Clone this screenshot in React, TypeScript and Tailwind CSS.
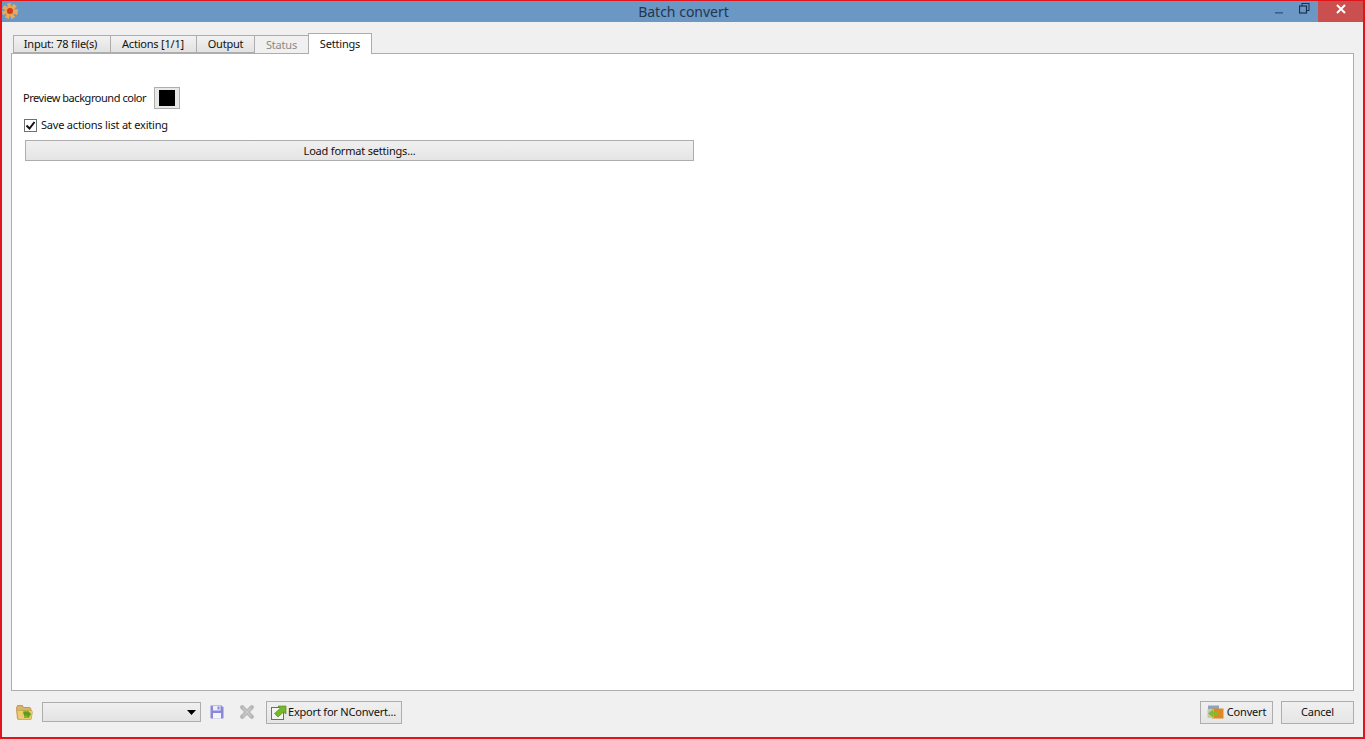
import React from "react";

const font = { fontFamily: '"Noto Sans", sans-serif' };

const FolderIcon = () => (
  <svg width="17" height="15" viewBox="0 0 17 15">
    <path d="M0.5 3 L1.5 0.5 H6.5 L7.5 2.5 H14 L15 4 V14 H1.5 Z" fill="#d8b470" stroke="#b98a3c" strokeWidth="0.8" />
    <path d="M1 5.5 H15.5 L16.5 7 L15 14.5 H2 Z" fill="#eccb72" stroke="#c99a3f" strokeWidth="0.6" />
    <path d="M6 5.5 L11 9 L8 9.5 V13 H13 L15 9 L11.5 5.5 Z" fill="#86b52c" />
    <path d="M7 7 L11.5 7 V5.5 L15 9 L11.5 12.5 V10.5 H8 Z" fill="#5f9c1c" />
  </svg>
);

const SaveIcon = () => (
  <svg width="14" height="14" viewBox="0 0 14 14">
    <path d="M0.5 0.5 H11.5 L13.5 2.5 V13.5 H0.5 Z" fill="#8b88d8" />
    <rect x="3" y="1" width="7.5" height="4.5" fill="#eeeefa" />
    <rect x="7.5" y="1.5" width="2" height="3" fill="#8b88d8" />
    <rect x="3" y="8" width="8" height="5.5" fill="#f4f4fb" />
  </svg>
);

const DeleteIcon = () => (
  <svg width="14" height="14" viewBox="0 0 14 14">
    <path d="M2.2 2.2 L11.8 11.8 M11.8 2.2 L2.2 11.8" stroke="#b7b7b7" strokeWidth="4.2" strokeLinecap="round" />
    <path d="M3 3 L11 11 M11 3 L3 11" stroke="#c9c9c9" strokeWidth="1.4" />
  </svg>
);

const ExportIcon = () => (
  <svg width="16" height="16" viewBox="0 0 16 16" className="shrink-0">
    <rect x="0.5" y="3.5" width="12" height="12" fill="#f4f4ee" stroke="#5d6f86" />
    <path d="M3.5 9.5 L9 4.5 L7 2 H15 V10 L12.5 8 L7 13 Z" fill="#76b82c" stroke="#4c8417" strokeWidth="0.6" />
  </svg>
);

const ConvertIcon = () => (
  <svg width="17" height="14" viewBox="0 0 17 14" className="shrink-0">
    <rect x="1" y="0.5" width="11" height="6" fill="#8ea3bf" />
    <rect x="5" y="3.5" width="11.5" height="10" fill="#dd8a26" />
    <rect x="0.5" y="4" width="6" height="9" fill="#c9c9a8" />
    <path d="M1 8.5 L6 4.5 V7 H11 V10 H6 V12.5 Z" fill="#86bb2e" />
  </svg>
);

const SmallButton = ({ className, children }: { className: string; children: React.ReactNode }) => (
  <div className={`h-[23px] flex items-center justify-center whitespace-nowrap border border-[#adadad] bg-gradient-to-b from-[#f0f0f0] to-[#e5e5e5] text-[11px] tracking-[-0.2px] text-[#111] ${className}`}>
    {children}
  </div>
);

export default function App() {
  const tabs = [
    { label: "Input: 78 file(s)", width: "w-[97px] pr-[3px]" },
    { label: "Actions [1/1]", width: "w-[86px] pr-[1px]" },
    { label: "Output", width: "w-[58px]" },
  ];

  return (
    <div style={font} className="w-[1365px] h-[739px] flex flex-col bg-[#f0f0f0] border-t border-l-2 border-r-2 border-b-2 border-[#e0141c] overflow-hidden">
      {/* Title bar */}
      <div className="h-[21px] shrink-0 flex items-center justify-between bg-[#6b97c5] relative">
        <div className="absolute -left-[2px] top-0">
          <svg width="20" height="20" viewBox="0 0 20 20">
            <circle cx="10" cy="10" r="5.5" fill="#ee9a3e" stroke="#e8a95e" strokeWidth="5" strokeDasharray="3 1.6" />
            <circle cx="10" cy="10" r="3" fill="#d23c1e" />
          </svg>
        </div>
        <div className="flex-1 text-center text-[14px] text-[#24364d] pl-[90px]">Batch convert</div>
        <div className="flex items-center h-full">
          <svg width="10" height="4" viewBox="0 0 10 4" className="mt-[2px]">
            <rect x="0" y="1" width="8" height="1.6" fill="#3f5f87" />
          </svg>
          <svg width="11" height="11" viewBox="0 0 11 11" className="ml-[14px] mb-[6px]">
            <rect x="3" y="0.5" width="7" height="7" fill="none" stroke="#1c2f4d" />
            <rect x="0.5" y="3" width="7" height="7" fill="#6b97c5" stroke="#1c2f4d" strokeWidth="1.2" />
          </svg>
          <div className="ml-[8px] w-[45px] h-full bg-[#c9504f] flex items-center justify-center">
            <svg width="10" height="10" viewBox="0 0 10 10" className="mb-[5px]">
              <path d="M1 1 L9 9 M9 1 L1 9" stroke="#fff" strokeWidth="2" />
            </svg>
          </div>
        </div>
      </div>

      {/* Tabs */}
      <div className="h-[31px] shrink-0 flex items-end pl-[11px] relative z-10 text-[11px] tracking-[-0.2px]">
        {tabs.map((t) => (
          <div key={t.label} className={`${t.width} h-[18px] pt-[1px] flex items-center justify-center border border-[#adadad] border-r-0 bg-gradient-to-b from-[#f2f2f2] to-[#e2e2e2] text-[#111]`}>
            {t.label}
          </div>
        ))}
        <div className="w-[54px] h-[18px] pt-[1px] flex items-center justify-center border-l border-t border-[#adadad] text-[#8a8a8a]">Status</div>
        <div className="w-[64px] h-[21px] -mb-px flex items-center justify-center border border-b-0 border-[#adadad] bg-white text-[#111]">Settings</div>
      </div>

      {/* Panel */}
      <div className="mx-[9px] flex-1 border border-[#adadad] bg-white pl-[11px] pt-[32px]">
        <div className="flex items-center h-[24px] text-[11px] tracking-[-0.45px] text-[#111]">
          <span>Preview background color</span>
          <div className="ml-[8px] w-[26px] h-[22px] flex items-center justify-center border border-[#adadad] bg-[#e8e8e8]">
            <div className="w-[16px] h-[16px] bg-black" />
          </div>
        </div>
        <div className="mt-[7px] flex items-center h-[16px] text-[11px] tracking-[-0.2px] text-[#111]">
          <div className="ml-[1px] w-[13px] h-[13px] border border-[#707070] bg-white flex items-center justify-center">
            <svg width="11" height="11" viewBox="0 0 11 11">
              <path d="M1.5 5.5 L4.5 8.5 L9.5 2" fill="none" stroke="#111" strokeWidth="2" />
            </svg>
          </div>
          <span className="ml-[4px]">Save actions list at exiting</span>
        </div>
        <SmallButton className="mt-[7px] ml-[2px] w-[669px] !h-[21px] pt-[1px]">Load format settings...</SmallButton>
      </div>

      {/* Bottom bar */}
      <div className="h-[46px] shrink-0 flex items-center pl-[14px] pr-[9px] pb-[4px] text-[11px] text-[#111]">
        <FolderIcon />
        <div className="ml-[9px] w-[159px] h-[20px] flex items-center justify-end pr-[4px] border border-[#adadad] bg-gradient-to-b from-[#f0f0f0] to-[#e3e3e3]">
          <svg width="9" height="5" viewBox="0 0 9 5">
            <path d="M0 0 H9 L4.5 5 Z" fill="#000" />
          </svg>
        </div>
        <div className="ml-[9px]"><SaveIcon /></div>
        <div className="ml-[16px]"><DeleteIcon /></div>
        <SmallButton className="ml-[12px] w-[136px] !justify-start pl-[4px] gap-[1px]">
          <ExportIcon />
          <span>Export for NConvert...</span>
        </SmallButton>
        <div className="flex-1" />
        <SmallButton className="w-[73px] gap-[3px]">
          <ConvertIcon />
          <span>Convert</span>
        </SmallButton>
        <SmallButton className="ml-[8px] w-[73px]">Cancel</SmallButton>
      </div>
    </div>
  );
}
